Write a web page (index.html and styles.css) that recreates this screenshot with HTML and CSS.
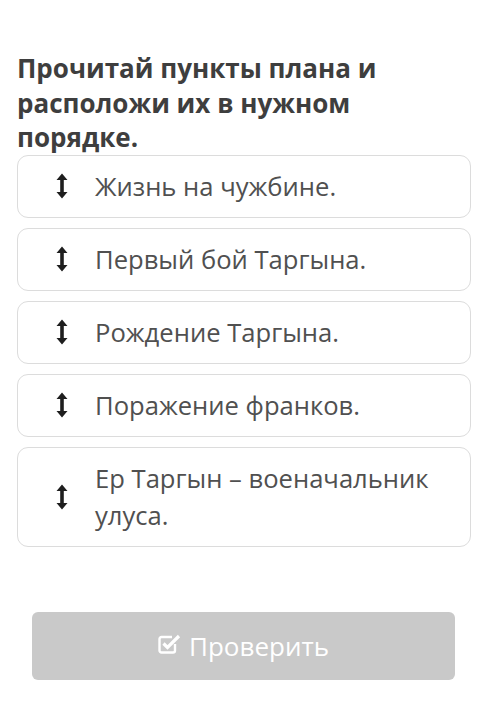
FILE: index.html
```html
<!DOCTYPE html>
<html lang="ru">
<head>
<meta charset="utf-8">
<link rel="stylesheet" href="styles.css">
</head>
<body>
<div class="page">
  <h1 class="title">Прочитай пункты плана и расположи их в нужном порядке.</h1>
  <div class="list">
    <div class="card">
      <svg class="drag" viewBox="0 0 12 26"><path d="M6 0.5 L11.5 7 H7.8 V19 H11.5 L6 25.5 L0.5 19 H4.2 V7 H0.5 Z" fill="#1e1e1e"/></svg>
      <span class="text">Жизнь на чужбине.</span>
    </div>
    <div class="card">
      <svg class="drag" viewBox="0 0 12 26"><path d="M6 0.5 L11.5 7 H7.8 V19 H11.5 L6 25.5 L0.5 19 H4.2 V7 H0.5 Z" fill="#1e1e1e"/></svg>
      <span class="text">Первый бой Таргына.</span>
    </div>
    <div class="card">
      <svg class="drag" viewBox="0 0 12 26"><path d="M6 0.5 L11.5 7 H7.8 V19 H11.5 L6 25.5 L0.5 19 H4.2 V7 H0.5 Z" fill="#1e1e1e"/></svg>
      <span class="text">Рождение Таргына.</span>
    </div>
    <div class="card">
      <svg class="drag" viewBox="0 0 12 26"><path d="M6 0.5 L11.5 7 H7.8 V19 H11.5 L6 25.5 L0.5 19 H4.2 V7 H0.5 Z" fill="#1e1e1e"/></svg>
      <span class="text">Поражение франков.</span>
    </div>
    <div class="card">
      <svg class="drag" viewBox="0 0 12 26"><path d="M6 0.5 L11.5 7 H7.8 V19 H11.5 L6 25.5 L0.5 19 H4.2 V7 H0.5 Z" fill="#1e1e1e"/></svg>
      <span class="text">Ер Таргын – военачальник улуса.</span>
    </div>
  </div>
  <div class="actions">
    <button class="check">
      <svg class="check-icon" viewBox="0 0 23 20"><path d="M17 10 V16.5 a2 2 0 0 1 -2 2 H3.5 a2 2 0 0 1 -2 -2 V5 a2 2 0 0 1 2 -2 H14" fill="none" stroke="#fff" stroke-width="2.4"/><path d="M5.5 9.5 L9.5 13.5 L21 2" fill="none" stroke="#fff" stroke-width="3.2"/></svg>
      <span>Проверить</span>
    </button>
  </div>
</div>
</body>
</html>
```
FILE: styles.css
```css
html, body {
  margin: 0;
  padding: 0;
  background: #fff;
}
.page {
  padding: 51px 29px 0 17px;
  font-family: "Open Sans", "Noto Sans", sans-serif;
}
.title {
  margin: 0;
  max-width: 400px;
  font-size: 26px;
  line-height: 34.5px;
  font-weight: 700;
  color: #3e3e3e;
}
.list {
  display: flex;
  flex-direction: column;
  gap: 10px;
}
.card {
  display: flex;
  align-items: center;
  border: 1px solid #dcdcdc;
  border-radius: 11px;
  padding: 12px 20px 12px 38px;
  background: #fff;
}
.drag {
  flex: none;
  width: 12px;
  height: 26px;
  margin-right: 27px;
}
.text {
  font-size: 25.6px;
  line-height: 37px;
  color: #505050;
}
.actions {
  padding: 65px 16px 0 15px;
}
.check {
  width: 100%;
  height: 68px;
  border: none;
  border-radius: 6px;
  background: #c9c9c9;
  color: #fff;
  font-family: "Open Sans", "Noto Sans", sans-serif;
  font-size: 26px;
  display: flex;
  align-items: center;
  justify-content: center;
  gap: 8px;
  padding: 0;
}
.check-icon {
  width: 23px;
  height: 20px;
  flex: none;
  margin-top: -4px;
}
```
